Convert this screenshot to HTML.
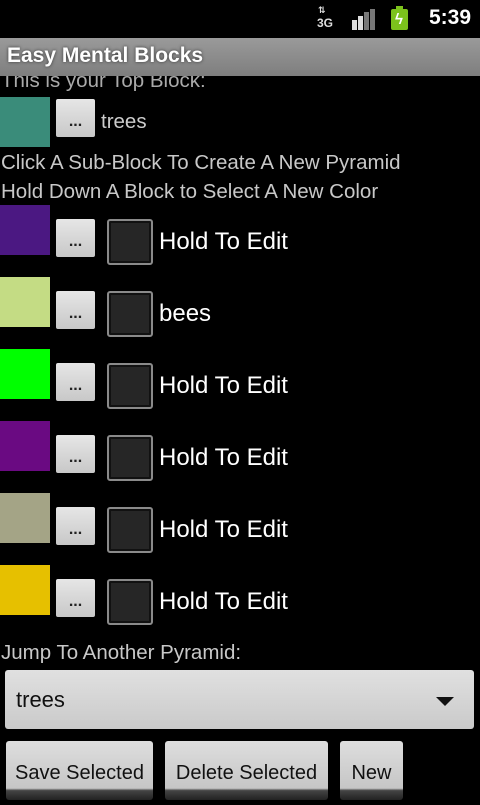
<!DOCTYPE html>
<html><head><meta charset="utf-8"><style>
*{margin:0;padding:0;box-sizing:border-box}
body{width:480px;height:800px;background:#000;position:relative;overflow:hidden;font-family:"Liberation Sans","DejaVu Sans",sans-serif}
.a{position:absolute;white-space:nowrap}
.title{left:0;top:38px;width:480px;height:38px;background:linear-gradient(#9a9a9a,#7e7e7e);z-index:2}
.title span{position:absolute;left:7px;top:6px;font-size:21px;font-weight:bold;color:#fff;text-shadow:0 0 3px #333}
.sq{position:absolute;left:0;width:50px;height:50px}
.btn{position:absolute;left:56px;width:39px;height:38px;background:linear-gradient(#e6e6e6,#c8c8c8);border-radius:2px;color:#222;font-size:16px;font-weight:bold;text-align:center;line-height:46px}
.cb{position:absolute;left:107px;width:46px;height:46px;border:2px solid #8a8a8a;border-radius:3px;background:#262626;box-shadow:inset 0 0 0 2px #111}
.lbl{position:absolute;left:159px;font-size:24px;color:#fff}
.gt{font-size:20.5px;color:#c8c8c8;left:1px}
.b{position:absolute;top:741px;height:59px;background:linear-gradient(#dedede,#c6c6c6 80%,#444 84%,#222);border-radius:3px;font-size:20px;color:#111;text-align:center;line-height:64px}
</style></head><body>
<div class="a" style="right:9px;top:6px;color:#fff;font-size:21px;font-weight:bold">5:39</div>
<div class="a" style="left:391px;top:9px;width:17px;height:21px;background:#7cc21c;border-radius:2px"></div>
<div class="a" style="left:396px;top:6px;width:7px;height:4px;background:#7cc21c"></div>
<div class="a" style="left:395px;top:11px;color:#fff;font-size:15px;font-weight:bold">ϟ</div>
<div class="a" style="left:352px;top:20px;width:5px;height:10px;background:#ddd"></div>
<div class="a" style="left:358px;top:16px;width:5px;height:14px;background:#ddd"></div>
<div class="a" style="left:364px;top:12px;width:5px;height:18px;background:#777"></div>
<div class="a" style="left:370px;top:9px;width:5px;height:21px;background:#777"></div>
<div class="a" style="left:318px;top:5px;color:#ddd;font-size:9px;font-weight:bold">⇅</div>
<div class="a" style="left:317px;top:16px;color:#ddd;font-size:12px;font-weight:bold">3G</div>
<div class="a title"><span>Easy Mental Blocks</span></div>
<div class="a gt" style="top:69px;color:#aaa">This is your Top Block:</div>
<div class="sq" style="top:97px;background:#3a8c7a"></div>
<div class="btn" style="top:99px">...</div>
<div class="a" style="left:101px;top:110px;font-size:20.5px;color:#ccc">trees</div>
<div class="a gt" style="top:151px">Click A Sub-Block To Create A New Pyramid</div>
<div class="a gt" style="top:180px">Hold Down A Block to Select A New Color</div>

<div class="sq" style="top:205px;background:#4b1882"></div><div class="btn" style="top:219px">...</div><div class="cb" style="top:219px"></div><div class="lbl" style="top:228px">Hold To Edit</div>
<div class="sq" style="top:277px;background:#c4dc84"></div><div class="btn" style="top:291px">...</div><div class="cb" style="top:291px"></div><div class="lbl" style="top:300px">bees</div>
<div class="sq" style="top:349px;background:#00ff00"></div><div class="btn" style="top:363px">...</div><div class="cb" style="top:363px"></div><div class="lbl" style="top:372px">Hold To Edit</div>
<div class="sq" style="top:421px;background:#6a0a82"></div><div class="btn" style="top:435px">...</div><div class="cb" style="top:435px"></div><div class="lbl" style="top:444px">Hold To Edit</div>
<div class="sq" style="top:493px;background:#a4a486"></div><div class="btn" style="top:507px">...</div><div class="cb" style="top:507px"></div><div class="lbl" style="top:516px">Hold To Edit</div>
<div class="sq" style="top:565px;background:#e6c000"></div><div class="btn" style="top:579px">...</div><div class="cb" style="top:579px"></div><div class="lbl" style="top:588px">Hold To Edit</div>

<div class="a gt" style="top:641px">Jump To Another Pyramid:</div>
<div class="a" style="left:5px;top:670px;width:469px;height:59px;background:linear-gradient(#e0e0e0,#cacaca);border-radius:3px"></div>
<div class="a" style="left:16px;top:687px;font-size:22px;color:#111">trees</div>
<div class="a" style="left:436px;top:697px;width:0;height:0;border-left:9px solid transparent;border-right:9px solid transparent;border-top:9px solid #111"></div>
<div class="b" style="left:6px;width:147px">Save Selected</div>
<div class="b" style="left:165px;width:163px">Delete Selected</div>
<div class="b" style="left:340px;width:63px">New</div>
</body></html>
